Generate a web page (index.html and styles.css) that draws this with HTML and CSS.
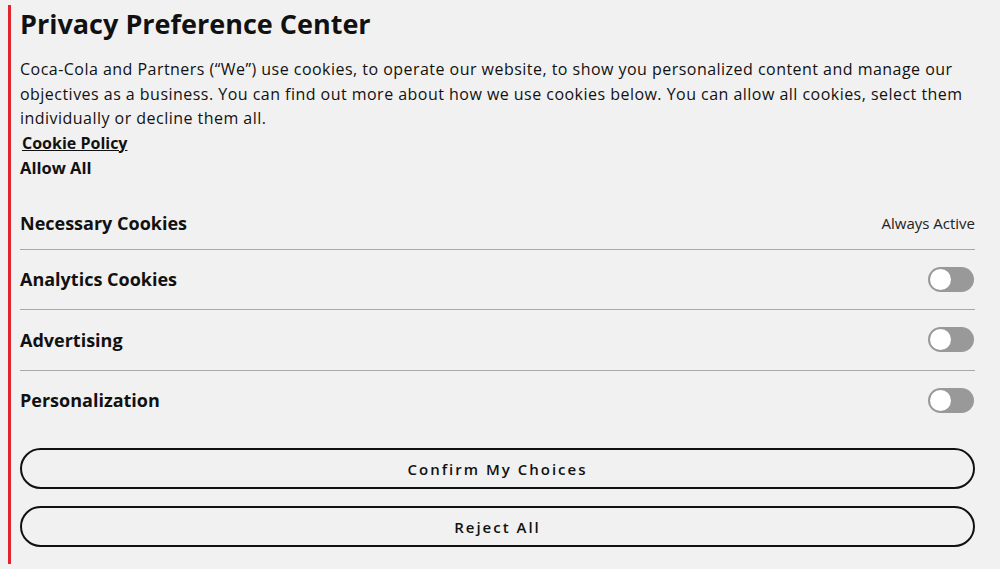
FILE: index.html
```html
<!DOCTYPE html>
<html lang="en">
    <head>
        <meta charset="UTF-8">
        <title>Privacy Preference Center</title>
        <link rel="stylesheet" href="styles.css">
    </head>
    <body>
        <div class="pc">
            <h2 class="pc__title">Privacy Preference Center</h2>
            <p class="pc__text">Coca-Cola and Partners (“We”) use cookies, to operate our website, to show you personalized content and manage our objectives as a business. You can find out more about how we use cookies below. You can allow all cookies, select them individually or decline them all.</p>
            <a class="pc__policy" href="#">Cookie Policy</a>
            <button class="pc__allow" type="button">Allow All</button>
            <div class="pc__list">
                <div class="pc__item">
                    <span class="pc__name">Necessary Cookies</span>
                    <span class="pc__always">Always Active</span>
                </div>
                <div class="pc__item">
                    <span class="pc__name">Analytics Cookies</span>
                    <span class="toggle"><span class="toggle__knob"></span></span>
                </div>
                <div class="pc__item">
                    <span class="pc__name">Advertising</span>
                    <span class="toggle"><span class="toggle__knob"></span></span>
                </div>
                <div class="pc__item">
                    <span class="pc__name">Personalization</span>
                    <span class="toggle"><span class="toggle__knob"></span></span>
                </div>
            </div>
            <div class="pc__buttons">
                <button class="pc__button" type="button">Confirm My Choices</button>
                <button class="pc__button" type="button">Reject All</button>
            </div>
        </div>
    </body>
</html>
```

FILE: styles.css
```css
html, body{
    margin: 0;
}

body{
    background: #f1f1f1;
    color: #111;
    font-family: "Open Sans", sans-serif;
}

.pc{
    margin: 5px 0 6px 8px;
    border-left: 3px solid #e0232d;
    padding: 0 25px 17px 9px;
}

.pc__title{
    margin: 0;
    padding-top: 4px;
    font-size: 27px;
    line-height: 30px;
    font-weight: 700;
}

.pc__text{
    margin: 18px 0 0;
    font-size: 16px;
    line-height: 24.5px;
    letter-spacing: 0.47px;
}

.pc__policy{
    display: block;
    margin-left: 2px;
    color: #111;
    font-weight: 700;
    font-size: 16px;
    line-height: 25px;
}

.pc__allow{
    display: block;
    padding: 0;
    border: 0;
    background: none;
    color: #111;
    font: 700 16.5px/24px "Open Sans", sans-serif;
}

.pc__list{
    margin-top: 25px;
}

.pc__item{
    display: flex;
    align-items: center;
    justify-content: space-between;
    height: 59.5px;
    border-bottom: 1px solid #a8a8a8;
}

.pc__item:first-child{
    height: 52px;
    margin-top: -8px;
}

.pc__item:last-child{
    border-bottom: 0;
}

.pc__name{
    font-size: 18px;
    font-weight: 700;
}

.pc__always{
    font-size: 15px;
    color: #222;
}

.toggle{
    position: relative;
    width: 46px;
    height: 25px;
    margin-right: 1px;
    border-radius: 13px;
    background: #999;
}

.toggle__knob{
    position: absolute;
    left: 2px;
    top: 2px;
    width: 21px;
    height: 21px;
    border-radius: 50%;
    background: #fff;
}

.pc__buttons{
    display: flex;
    flex-direction: column;
    gap: 17px;
    margin-top: 18px;
}

.pc__button{
    height: 41px;
    border: 2px solid #111;
    border-radius: 21px;
    background: transparent;
    color: #111;
    font: 600 15px "Open Sans", sans-serif;
    letter-spacing: 2px;
}
```
